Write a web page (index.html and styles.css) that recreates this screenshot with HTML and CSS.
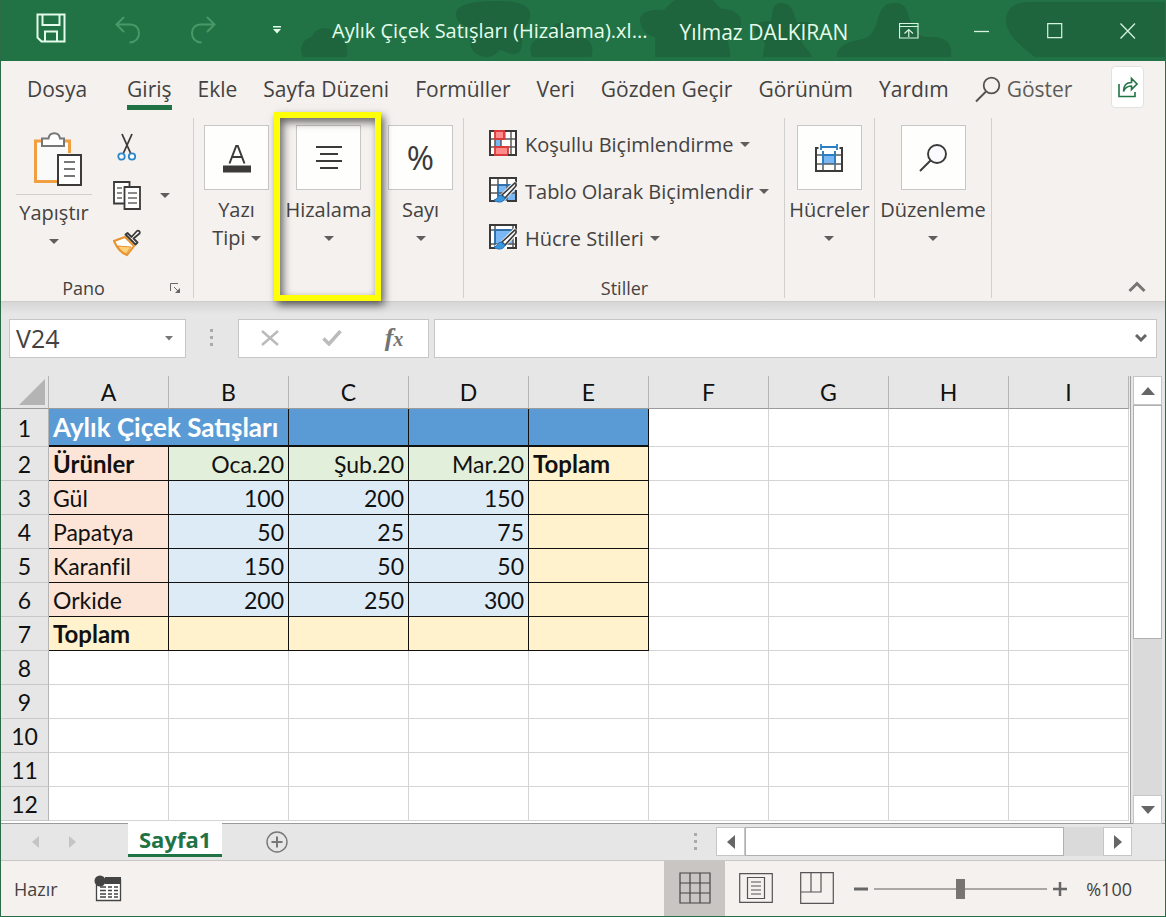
FILE: index.html
```html
<!DOCTYPE html>
<html lang="tr">
<head>
<meta charset="utf-8">
<title>Aylık Çiçek Satışları (Hizalama)</title>
<link rel="stylesheet" href="styles.css">
</head>
<body>
<div class="window">

  <header class="titlebar">
    <svg class="titlebar-art" width="864" height="57" viewBox="302 0 864 57" aria-hidden="true">
      <path d="M304 57c-4-8-1-18 9-20 3-11 20-12 24-1 9 1 14 14 10 21z"/>
      <path d="M457 13c2-12 30-12 44-12 16 0 32 4 30 16-1 9-9 13-8 21 0 8 0 15-7 16-6 1-10-4-16-4-3 6-12 9-20 5-12-5-8-16-8-26-6-3-16-7-15-16z"/>
      <path d="M533 57c-5-14 3-20 16-19 2-20 24-20 28-1 12-1 20 8 15 20z"/>
      <path d="M656 57V37c-11-2-15-10-15-18 1-7 12-10 24-9 3-2 8-10 13-10h34c4 0 7 8 11 9 12 0 20 6 19 15-1 10-6 14-13 14 0 9 3 14 2 19z"/>
      <path d="M764 57c0-8 4-14 0-17-7-3-10-8-7-13 3-7 10-5 15-6 2-9 1-18 10-18 12 0 12 11 16 19 6 0 16-1 17 6 1 6-7 9-13 12 2 7 9 11 11 17z"/>
      <path d="M838 57c-1-9 8-15 22-17 16-3 17-15 20-25 3-8 7-12 16-12 13 0 12 11 17 22 4 9 9 12 16 12 13 0 25 2 23 20z"/>
      <path d="M1007 20c0-12 10-18 24-18h135v55h-130c-13-10-29-22-29-37z"/>
    </svg>
    <div class="quick">
      <button class="quick-btn" aria-label="Kaydet"><svg width="30" height="30" viewBox="0 0 30 30"><path d="M1.500 1.500h27v27H5.500l-4-4zM6.500 2v10h17V2M9 28v-9.500h12V28" fill="none" stroke="#e4fdea" stroke-width="2"/></svg></button>
      <button class="quick-btn dim" aria-label="Geri Al"><svg width="26" height="28" viewBox="0 0 26 28"><path d="M9 1L1.500 8.500 9 16M2 8.500h13c6 0 9 4 9 8.500 0 6-3.500 9-9.500 9.500" fill="none" stroke="#4a9868" stroke-width="2"/></svg></button>
      <button class="quick-btn dim" aria-label="Yinele"><svg width="26" height="28" viewBox="0 0 26 28"><path d="M17 1l7.500 7.500L17 16M24 8.500H11c-6 0-9 4-9 8.500 0 6 3.500 9 9.500 9.500" fill="none" stroke="#4a9868" stroke-width="2"/></svg></button>
      <button class="quick-btn" aria-label="Hızlı Erişim Araç Çubuğunu Özelleştir"><svg width="8" height="8" viewBox="0 0 8 8"><path d="M0 0h8v1.500H0zM0 3h8L4 7.500z" fill="#e4fdea"/></svg></button>
    </div>
    <h1 class="doc-title">Aylık Çiçek Satışları (Hizalama).xl...</h1>
    <span class="user">Yılmaz DALKIRAN</span>
    <div class="win-buttons">
      <button aria-label="Şerit Görüntüleme Seçenekleri"><svg width="20" height="16" viewBox="0 0 20 16"><path d="M.5.500h18.500v14.500H.5zM.5 3.500H19M9.750 14V6.500M5.500 10.500l4.250-4 4.250 4" fill="none" stroke="#d5f3df" stroke-width="1.200"/></svg></button>
      <button aria-label="Simge Durumuna Küçült"><svg width="16" height="16" viewBox="0 0 16 16"><path d="M0 8.500h15" stroke="#d5f3df" stroke-width="1.300"/></svg></button>
      <button aria-label="Ekranı Kapla"><svg width="16" height="16" viewBox="0 0 16 16"><path d="M.7.700h14v14H.7z" fill="none" stroke="#d5f3df" stroke-width="1.200"/></svg></button>
      <button aria-label="Kapat"><svg width="16" height="16" viewBox="0 0 16 16"><path d="M.5.500l14.500 15M15 .5L.5 15.500" stroke="#d5f3df" stroke-width="1.300"/></svg></button>
    </div>
  </header>

  <nav class="tabs">
    <button class="tab tab-file">Dosya</button>
    <button class="tab tab-active">Giriş</button>
    <button class="tab">Ekle</button>
    <button class="tab">Sayfa Düzeni</button>
    <button class="tab">Formüller</button>
    <button class="tab">Veri</button>
    <button class="tab">Gözden Geçir</button>
    <button class="tab">Görünüm</button>
    <button class="tab">Yardım</button>
    <button class="tab tab-search"><svg width="26" height="27" viewBox="0 0 26 27"><circle cx="16.500" cy="9.500" r="7.800" fill="none" stroke="#555250" stroke-width="1.800"/><path d="M11 15.500L1 25.500" stroke="#555250" stroke-width="2"/></svg>Göster</button>
    <button class="share" aria-label="Paylaş"><svg width="22" height="22" viewBox="0 0 22 22"><path d="M2 8v12.500h16V16" fill="none" stroke="#217346" stroke-width="1.600"/><path d="M6.500 15.500c0-7 3-9 8-9V2.500l5.500 5.500-5.500 5.500V10c-4 0-6.500 1.500-8 5.500z" fill="none" stroke="#217346" stroke-width="1.600"/></svg></button>
  </nav>

  <section class="ribbon">
    <div class="group group-clip">
      <div class="clip-body">
        <button class="paste">
          <span class="paste-icon"><svg width="50" height="56" viewBox="0 0 50 56"><path d="M3 9h33.500v40H3z" fill="#fafafa"/><path d="M10 9H2.500v40.500H24M29 9h7.500v12" fill="none" stroke="#f0a040" stroke-width="3"/><path d="M9 14V6.500h6.500c1-7 10.500-7 11.500 0H31V14z" fill="#fff" stroke="#777" stroke-width="2"/><path d="M25 23h23v30H25z" fill="#fff" stroke="#3b3a39" stroke-width="2"/><path d="M31 30h11M31 37h11M31 44h11" stroke="#777" stroke-width="2"/></svg></span>
          <span>Yapıştır</span>
          <span class="caret-line"><i class="caret"></i></span>
        </button>
        <div class="clip-tools">
          <button aria-label="Kes"><svg width="20" height="28" viewBox="0 0 20 28"><path d="M5 1l8.500 19M15 1L6.500 20" stroke="#3b3a39" stroke-width="1.800"/><circle cx="4.500" cy="23.500" r="3.200" fill="#fff" stroke="#2a87c8" stroke-width="1.800"/><circle cx="15" cy="23.500" r="3.200" fill="#fff" stroke="#2a87c8" stroke-width="1.800"/></svg></button>
          <button aria-label="Kopyala"><svg width="28" height="29" viewBox="0 0 28 29"><path d="M11 22.500H1V1h15.500v4" fill="#fff" stroke="#3b3a39" stroke-width="1.800"/><path d="M4 7h5M4 12h5M4 17h5" stroke="#666" stroke-width="1.500"/><path d="M11.500 6H27v22H11.500z" fill="#fff" stroke="#3b3a39" stroke-width="1.800"/><path d="M15 12h9M15 17h9M15 22h9" stroke="#666" stroke-width="1.500"/></svg></button>
          <button aria-label="Biçim Boyacısı"><svg width="28" height="28" viewBox="0 0 28 28"><path d="M1 12l11-4 9 9-7 9C8 24 4 19 1 12z" fill="#fff" stroke="#e8922f" stroke-width="2"/><path d="M5 17l13 1-5 7c-4-2-6-4-8-8z" fill="#ffd27a" stroke="#e8922f"/><path d="M12.500 5.500l10 10 2-2-4-4 6-5c1-2-1-3.500-2.500-2.500l-5.500 6-4-4z" fill="#fff" stroke="#3b3a39" stroke-width="1.800" stroke-linejoin="round"/></svg></button>
        </div>
        <button class="copy-more" aria-label="Kopyalama seçenekleri"><i class="caret"></i></button>
      </div>
      <div class="group-foot"><span>Pano</span><button class="launcher" aria-label="Pano bölmesi"><svg width="11" height="11" viewBox="0 0 11 11"><path d="M.5 8V.5H8M4 4l5 5" fill="none" stroke="#666"/><path d="M10 5v5H5z" fill="#666"/></svg></button></div>
    </div>

    <div class="group group-format">
      <button class="big"><span class="tile"><svg width="30" height="30" viewBox="0 0 30 30"><path d="M7.500 20.500L14.200 3h1.600l6.700 17.500M10 14h10" fill="none" stroke="#3b3a39" stroke-width="2"/><path d="M1 22.500h28v7H1z" fill="#3b3a39"/></svg></span><span>Yazı</span><span class="caret-line">Tipi <i class="caret"></i></span></button>
      <button class="big big-marked"><span class="tile"><svg width="26" height="24" viewBox="0 0 26 24"><path d="M0 1h26M4 8h18M0 15h26M4 22h18" stroke="#3b3a39" stroke-width="2"/></svg></span><span>Hizalama</span><span class="caret-line"><i class="caret"></i></span></button>
      <button class="big"><span class="tile percent">%</span><span>Sayı</span><span class="caret-line"><i class="caret"></i></span></button>
    </div>

    <div class="group group-styles">
      <div class="style-list">
        <button class="style-item"><svg width="28" height="26" viewBox="0 0 28 26"><path d="M1 1h26v24H1z" fill="#fff"/><path d="M6 1h11v8H6zM6 17h13v8H6z" fill="#ff8b8b"/><path d="M6 9h6v8H6z" fill="#7ab8f5"/><path d="M1 9h26M1 17h26M22 1v24M6 9v8M12 9v8" stroke="#5a5958" stroke-width="1.500"/><path d="M6 1v8h9V1M6 25v-8h13v8" fill="none" stroke="#d83b3b" stroke-width="1.800"/><path d="M1 1h26v24H1z" fill="none" stroke="#3b3a39" stroke-width="2"/><path d="M5 1h11M5 25h14" stroke="#d83b3b" stroke-width="2"/></svg><span>Koşullu Biçimlendirme</span><i class="caret"></i></button>
        <button class="style-item"><svg width="28" height="26" viewBox="0 0 28 26"><path d="M1 1h26v23H1z" fill="#fff"/><path d="M9 8h18v16H9z" fill="#7ab8f5"/><path d="M1 8h26M1 16h26M9 1v23M18 1v23" stroke="#5a5958" stroke-width="1.500"/><path d="M9 24V8h18" fill="none" stroke="#1e6fb8" stroke-width="1.500"/><path d="M7 24H1V1h26v5M18 24h9V13" fill="none" stroke="#3b3a39" stroke-width="2"/><path d="M28 6L13 21l-6 4" stroke="#f4f1ef" stroke-width="7"/><path d="M26 6c2 1 1 3 0 4L16 21l-3-3z" fill="#fff" stroke="#3b3a39" stroke-width="1.600"/><path d="M12 18c-4 0-3 5-7 5 3 3 10 3 11-2z" fill="#3c96dc" stroke="#1e6fb8"/></svg><span>Tablo Olarak Biçimlendir</span><i class="caret"></i></button>
        <button class="style-item"><svg width="28" height="26" viewBox="0 0 28 26"><path d="M1 1h26v23H1z" fill="#fff"/><path d="M6 6h18v14H6z" fill="#7ab8f5"/><path d="M1 6h26M6 1v23M1 20h26M24 1v23" stroke="#5a5958" stroke-width="1.500"/><path d="M6 20V6h18" fill="none" stroke="#1e6fb8" stroke-width="1.500"/><path d="M7 24H1V1h26v5M18 24h9V13" fill="none" stroke="#3b3a39" stroke-width="2"/><path d="M28 6L13 21l-6 4" stroke="#f4f1ef" stroke-width="7"/><path d="M26 6c2 1 1 3 0 4L16 21l-3-3z" fill="#fff" stroke="#3b3a39" stroke-width="1.600"/><path d="M12 18c-4 0-3 5-7 5 3 3 10 3 11-2z" fill="#3c96dc" stroke="#1e6fb8"/></svg><span>Hücre Stilleri</span><i class="caret"></i></button>
      </div>
      <div class="group-foot"><span>Stiller</span></div>
    </div>

    <div class="group group-cells">
      <button class="big"><span class="tile"><svg width="28" height="30" viewBox="0 0 28 30"><path d="M1 6h26v22H1z" fill="#fff"/><path d="M8 12h12v9H8z" fill="#7ab8f5"/><path d="M1 12h26M1 21h26M8 8v20M20 8v20" stroke="#5a5958" stroke-width="1.500"/><path d="M3.500 5H1v23h26V5h-2.500" fill="none" stroke="#3b3a39" stroke-width="2"/><path d="M6 1v6M22 1v6M6 4h16M8 8v14M20 8v14M8 12h12" fill="none" stroke="#2a7fc4" stroke-width="1.800"/></svg></span><span>Hücreler</span><span class="caret-line"><i class="caret"></i></span></button>
    </div>

    <div class="group group-edit">
      <button class="big"><span class="tile"><svg width="28" height="28" viewBox="0 0 28 28"><circle cx="18" cy="10" r="9" fill="#fafaff" stroke="#3b3a39" stroke-width="1.900"/><path d="M11.500 16.500L1 27" stroke="#3b3a39" stroke-width="2"/></svg></span><span>Düzenleme</span><span class="caret-line"><i class="caret"></i></span></button>
    </div>

    <button class="collapse" aria-label="Şeridi Daralt"><svg width="18" height="12" viewBox="0 0 18 12"><path d="M1.500 10L9 2.500l7.500 7.500" fill="none" stroke="#777573" stroke-width="3"/></svg></button>
  </section>

  <section class="formula-bar">
    <div class="name-box">
      <input class="name-input" type="text" value="V24" aria-label="Ad Kutusu">
      <button aria-label="Ad listesi"><svg width="8" height="5" viewBox="0 0 8 5"><path d="M0 0h8L4 4.500z" fill="#777"/></svg></button>
    </div>
    <svg class="grip" width="4" height="18" viewBox="0 0 4 18"><path d="M0 0h3v3H0zM0 7h3v3H0zM0 14h3v3H0z" fill="#aaa"/></svg>
    <div class="fx-box">
      <button aria-label="İptal"><svg width="18" height="16" viewBox="0 0 18 16"><path d="M1 1l16 14M17 1L1 15" stroke="#bbb" stroke-width="2.500"/></svg></button>
      <button aria-label="Gir"><svg width="20" height="16" viewBox="0 0 20 16"><path d="M1.500 8.500l5.500 5.500L18.500 1" fill="none" stroke="#bbb" stroke-width="3.500"/></svg></button>
      <button class="fx" aria-label="İşlev Ekle">f<small>x</small></button>
    </div>
    <div class="formula-box">
      <input class="formula-input" type="text" aria-label="Formül Çubuğu">
      <button aria-label="Formül Çubuğunu Genişlet"><svg width="12" height="8" viewBox="0 0 12 8"><path d="M1 1l5 5 5-5" fill="none" stroke="#666" stroke-width="3"/></svg></button>
    </div>
  </section>

  <main class="work">
    <div class="sheet">
      <table class="grid">
        <thead>
          <tr><th class="corner" aria-label="Tümünü Seç"><svg width="26" height="26" viewBox="0 0 26 26"><path d="M26 0v26H0z" fill="#b4b4b4"/></svg></th><th>A</th><th>B</th><th>C</th><th>D</th><th>E</th><th>F</th><th>G</th><th>H</th><th>I</th></tr>
        </thead>
        <tbody>
          <tr class="row-title"><th>1</th><td class="title" colspan="2">Aylık Çiçek Satışları</td><td class="title"></td><td class="title"></td><td class="title"></td><td></td><td></td><td></td><td></td></tr>
          <tr><th>2</th><td class="box name strong">Ürünler</td><td class="box month">Oca.20</td><td class="box month">Şub.20</td><td class="box month">Mar.20</td><td class="box total strong">Toplam</td><td></td><td></td><td></td><td></td></tr>
          <tr><th>3</th><td class="box name">Gül</td><td class="box num">100</td><td class="box num">200</td><td class="box num">150</td><td class="box total"></td><td></td><td></td><td></td><td></td></tr>
          <tr><th>4</th><td class="box name">Papatya</td><td class="box num">50</td><td class="box num">25</td><td class="box num">75</td><td class="box total"></td><td></td><td></td><td></td><td></td></tr>
          <tr><th>5</th><td class="box name">Karanfil</td><td class="box num">150</td><td class="box num">50</td><td class="box num">50</td><td class="box total"></td><td></td><td></td><td></td><td></td></tr>
          <tr><th>6</th><td class="box name">Orkide</td><td class="box num">200</td><td class="box num">250</td><td class="box num">300</td><td class="box total"></td><td></td><td></td><td></td><td></td></tr>
          <tr><th>7</th><td class="box total strong">Toplam</td><td class="box total"></td><td class="box total"></td><td class="box total"></td><td class="box total"></td><td></td><td></td><td></td><td></td></tr>
          <tr><th>8</th><td></td><td></td><td></td><td></td><td></td><td></td><td></td><td></td><td></td></tr>
          <tr><th>9</th><td></td><td></td><td></td><td></td><td></td><td></td><td></td><td></td><td></td></tr>
          <tr><th>10</th><td></td><td></td><td></td><td></td><td></td><td></td><td></td><td></td><td></td></tr>
          <tr><th>11</th><td></td><td></td><td></td><td></td><td></td><td></td><td></td><td></td><td></td></tr>
          <tr><th>12</th><td></td><td></td><td></td><td></td><td></td><td></td><td></td><td></td><td></td></tr>
        </tbody>
      </table>
    </div>
    <div class="vscroll">
      <button aria-label="Yukarı kaydır"><svg width="14" height="8" viewBox="0 0 14 8"><path d="M0 8h14L7 0z" fill="#666"/></svg></button>
      <div class="vtrack"><div class="vthumb"></div></div>
      <button aria-label="Aşağı kaydır"><svg width="14" height="8" viewBox="0 0 14 8"><path d="M0 0h14L7 8z" fill="#666"/></svg></button>
    </div>
  </main>

  <div class="sheet-tabs">
    <button class="nav" aria-label="Önceki sayfa"><svg width="7" height="12" viewBox="0 0 7 12"><path d="M7 0v12L0 6z" fill="#c4c4c4"/></svg></button>
    <button class="nav" aria-label="Sonraki sayfa"><svg width="7" height="12" viewBox="0 0 7 12"><path d="M0 0v12l7-6z" fill="#c4c4c4"/></svg></button>
    <button class="sheet-tab">Sayfa1</button>
    <button class="add-sheet" aria-label="Yeni sayfa"><svg width="22" height="22" viewBox="0 0 22 22"><circle cx="11" cy="11" r="10" fill="none" stroke="#777" stroke-width="1.400"/><path d="M11 5.500v11M5.500 11h11" stroke="#777" stroke-width="2"/></svg></button>
    <svg class="grip" width="4" height="18" viewBox="0 0 4 18"><path d="M0 0h3v3H0zM0 7h3v3H0zM0 14h3v3H0z" fill="#aaa"/></svg>
    <div class="hscroll">
      <button aria-label="Sola kaydır"><svg width="8" height="14" viewBox="0 0 8 14"><path d="M8 0v14L0 7z" fill="#666"/></svg></button>
      <div class="htrack"><div class="hthumb"></div></div>
      <button aria-label="Sağa kaydır"><svg width="8" height="14" viewBox="0 0 8 14"><path d="M0 0v14l8-7z" fill="#666"/></svg></button>
    </div>
  </div>

  <footer class="status">
    <span class="ready">Hazır</span>
    <button class="macro" aria-label="Makro kaydet"><svg width="28" height="28" viewBox="0 0 28 28"><path d="M2.500 10v15.500h24V4" fill="#fff" stroke="#444" stroke-width="1.300"/><path d="M11 2h16v7H11z" fill="#444"/><circle cx="6" cy="6" r="5.500" fill="#444"/><path d="M6 12h6M14 12h4M20 12h4M6 15.500h6M14 15.500h4M20 15.500h4M6 19h6M14 19h4M20 19h4M6 22h6M14 22h4M20 22h4" stroke="#444" stroke-width="1.500"/></svg></button>
    <div class="views">
      <button class="view view-active" aria-label="Normal"><svg width="32" height="32" viewBox="0 0 32 32"><path d="M1 1h30v30H1zM11 1v30M21 1v30M1 11h30M1 21h30" fill="none" stroke="#444" stroke-width="1.200"/></svg></button>
      <button class="view" aria-label="Sayfa Düzeni"><svg width="34" height="30" viewBox="0 0 34 30"><path d="M.7.700h32.600v28.600H.7zM8.500 4.500h17v21h-17zM12 9h10M12 13h10M12 17h10M12 21h10" fill="none" stroke="#555" stroke-width="1.200"/></svg></button>
      <button class="view" aria-label="Sayfa Sonu Önizleme"><svg width="34" height="32" viewBox="0 0 34 32"><path d="M.7.700h32.600v30.600H.7zM.7 20H21V.7M11 .7V20" fill="none" stroke="#555" stroke-width="1.200"/></svg></button>
    </div>
    <div class="zoom">
      <button aria-label="Uzaklaştır"><svg width="14" height="14" viewBox="0 0 14 14"><path d="M0 7h14" stroke="#666" stroke-width="3"/></svg></button>
      <input class="zoom-range" type="range" min="0" max="200" value="100" aria-label="Yakınlaştırma">
      <button aria-label="Yakınlaştır"><svg width="14" height="14" viewBox="0 0 14 14"><path d="M0 7h14M7 0v14" stroke="#666" stroke-width="2.500"/></svg></button>
      <span class="zoom-value">%100</span>
    </div>
  </footer>
</div>
</body>
</html>
```

FILE: styles.css
```css
* { box-sizing: border-box; }

body {
  margin: 0;
  font-family: "Open Sans", "Noto Sans", sans-serif;
  font-size: 20px;
  line-height: 28px;
  color: #444240;
}

button, input {
  margin: 0;
  padding: 0;
  border: 0;
  background: none;
  font: inherit;
  color: inherit;
}

svg { display: block; flex: none; }

.window {
  display: flex;
  flex-direction: column;
  height: 100vh;
  border: 1px solid #2a6b48;
  border-top: 0;
  background: #e6e6e6;
  overflow: hidden;
}

/* Title bar */
.titlebar {
  position: relative;
  display: flex;
  align-items: center;
  flex: none;
  height: 61px;
  padding: 0 1px 0 35px;
  background: #217346;
  color: #e4fdea;
}
.titlebar-art {
  position: absolute;
  top: 0;
  right: 0;
  fill: #1e643d;
}
.quick { display: flex; align-items: center; gap: 49px; height: 100%; padding-bottom: 6px; }
.quick .dim { padding-top: 4px; }
.quick-btn:last-child { margin-left: 8px; padding-top: 4px; }
.doc-title {
  position: relative;
  margin: 0 0 0 51px;
  font-size: 20px;
  font-weight: 400;
  white-space: nowrap;
}
.user { position: relative; margin-left: 32px; padding-top: 2px; font-size: 21px; white-space: nowrap; }
.win-buttons { position: relative; display: flex; height: 60px; margin-left: auto; }
.win-buttons button { display: grid; place-items: center; width: 73px; }

/* Ribbon tabs */
.tabs {
  display: flex;
  flex: none;
  height: 51px;
  padding: 5px 21px 0 26px;
  background: #f4f1ef;
  font-size: 21px;
  gap: 26px;
}
.tab { position: relative; height: 46px; white-space: nowrap; }
.tab-file { margin-right: 14px; }
.tab-active::after {
  content: "";
  position: absolute;
  left: 0;
  right: 0;
  bottom: 2px;
  height: 5px;
  background: #217346;
}
.tab-search { display: flex; align-items: center; gap: 6px; color: #5e5b58; }
.share {
  display: grid;
  place-items: center;
  width: 33px;
  height: 42px;
  margin-left: auto;
  border: 1px solid #e4e2e0;
  border-radius: 4px;
  background: #fff;
}

/* Ribbon body */
.ribbon {
  position: relative;
  display: flex;
  flex: none;
  height: 190px;
  padding: 6px 0 3px;
  border-bottom: 1px solid #cfcdcb;
  background: #f4f1ef;
}
.group { display: flex; border-right: 1px solid #d2d0ce; }
.caret {
  display: inline-block;
  border: 5px solid transparent;
  border-top-color: #605e5c;
  border-bottom: 0;
  vertical-align: 4px;
}
.caret-line { display: block; white-space: nowrap; }

.group-clip { flex-direction: column; width: 193px; }
.clip-body { display: flex; flex: 1; padding-left: 15px; }
.paste { display: flex; flex-direction: column; align-items: center; width: 76px; }
.paste-icon {
  display: grid;
  place-items: center;
  width: 100%;
  height: 77px;
  margin-bottom: 4px;
  padding: 8px 0 0 8px;
  border-bottom: 1px solid #d2d0ce;
}
.clip-tools { display: flex; flex-direction: column; width: 28px; margin-left: 21px; padding-top: 5px; }
.clip-tools button { display: grid; place-items: center; height: 48px; }
.copy-more { width: 48px; height: 154px; }
.group-foot {
  position: relative;
  display: flex;
  justify-content: center;
  flex: none;
  font-size: 18px;
  line-height: 20px;
}
.group-clip .group-foot { padding-right: 27px; }
.launcher { position: absolute; right: 12px; top: 5px; }

.big { display: flex; flex-direction: column; align-items: center; padding-top: 7px; white-space: nowrap; }
.tile {
  display: grid;
  place-items: center;
  width: 65px;
  height: 65px;
  margin-bottom: 6px;
  border: 1px solid #c8c6c4;
  background: #fefefc;
}
.percent { font-size: 33px; color: #3b3a39; }
.group-format .big { width: 85px; }
.group-format .big-marked { position: relative; width: 99px; }
.big-marked::after {
  content: "";
  position: absolute;
  inset: -6px -3px -3px -5px;
  border: 6px solid #ffff08;
  box-shadow: 3px 4px 8px rgba(0, 0, 0, .6), inset 3px 4px 8px rgba(0, 0, 0, .6);
}

.group-styles { flex-direction: column; width: 320px; margin-left: 1px; padding-left: 24px; }
.style-list { display: flex; flex-direction: column; flex: 1; padding-top: 3px; }
.style-item { display: flex; align-items: center; height: 47px; gap: 8px; white-space: nowrap; }
.style-item svg { margin-bottom: 3px; }
.style-item .caret { margin-left: -2px; }
.group-styles .group-foot { padding-right: 24px; }

.group-cells, .group-edit { justify-content: center; }
.group-cells { width: 90px; }
.group-edit { width: 117px; }
.collapse { position: absolute; right: 19px; bottom: 8px; }

/* Formula bar */
.formula-bar {
  display: flex;
  align-items: center;
  flex: none;
  height: 74px;
  padding: 0 8px 2px;
  background: linear-gradient(#d6d6d6, #e6e6e6 12px);
}
.name-box, .fx-box, .formula-box {
  display: flex;
  align-items: center;
  height: 39px;
  border: 1px solid #c6c6c6;
  background: #fff;
}
.name-box { width: 177px; padding: 0 12px 0 6px; }
.name-input { flex: 1; min-width: 0; font-size: 25px; }
.formula-bar .grip { margin: 0 24px; }
.fx-box { width: 191px; padding-right: 3px; }
.fx-box button { display: grid; place-items: center; flex: 1; }
.fx-box .fx {
  display: block;
  font-family: "Liberation Serif", serif;
  font-style: italic;
  font-weight: 700;
  font-size: 26px;
  color: #737373;
}
.fx small { font-size: 20px; }
.formula-box { flex: 1; margin-left: 5px; padding-right: 9px; }
.formula-input { flex: 1; min-width: 0; }

/* Worksheet */
.work { display: flex; flex: 1; min-height: 0; }
.sheet { flex: 1; min-width: 0; overflow: hidden; background: linear-gradient(#e6e6e6 33px, #fff 33px); border-right: 1px solid #a0a0a0; }
.grid {
  width: 1128px;
  table-layout: fixed;
  border-collapse: separate;
  border-spacing: 0;
  font-family: Lato, "Noto Sans", sans-serif;
  font-size: 23px;
  line-height: 30px;
  color: #111;
}
.grid th, .grid td { padding: 0 4px; height: 34px; }
.grid td { border-right: 1px solid #d4d4d4; border-bottom: 1px solid #d4d4d4; }
.grid th { background: #e6e6e6; font-weight: 400; border-right: 1px solid #b5b5b5; border-bottom: 1px solid #c9c9c9; }
.grid thead th { width: 120px; height: 33px; border-bottom-color: #9b9b9b; }
.grid thead .corner { width: 48px; padding: 0 3px 3px 18px; vertical-align: bottom; }
.grid .row-title td, .grid .row-title th { height: 38px; }
.grid .title {
  background: #5b9bd5;
  color: #fff;
  font-size: 26px;
  font-weight: 700;
  border-right-color: #111;
  border-bottom: 2px solid #111;
}
.grid .box { border-color: #111; }
.grid .strong { font-size: 24px; font-weight: 700; }
.name { background: #fce4d6; }
.month { background: #e2efda; text-align: right; }
.num { background: #ddebf7; text-align: right; }
.total { background: #fff2cc; }

.vscroll { display: flex; flex-direction: column; width: 30px; margin: 0 2px -1px; }
.vscroll button, .hscroll button {
  display: grid;
  place-items: center;
  flex: none;
  width: 29px;
  height: 29px;
  border: 1px solid #c6c6c6;
  background: #fff;
}
.vscroll button { position: relative; }
.vtrack { flex: 1; width: 29px; background: #dadada; }
.vthumb { height: 60%; border: 1px solid #b0b0b0; background: #fff; }

/* Sheet tabs */
.sheet-tabs {
  display: flex;
  align-items: center;
  flex: none;
  height: 37px;
  padding: 0 33px 1px 0;
  border-top: 1px solid #9b9b9b;
}
.nav { display: grid; place-items: center; width: 37px; height: 36px; }
.nav:first-child { margin-left: 16px; }
.sheet-tab {
  align-self: flex-start;
  height: 34px;
  margin: -1px 44px 0 37px;
  padding: 0 11px;
  border-bottom: 3px solid #217346;
  background: #fff;
  font-size: 22px;
  font-weight: 700;
  color: #217346;
}
.sheet-tabs .grip { margin: 0 18px 0 auto; }
.hscroll { display: flex; width: 416px; }
.htrack { flex: 1; background: #dadada; }
.hthumb { width: 89%; height: 29px; border: 1px solid #b0b0b0; background: #fff; }

/* Status bar */
.status {
  display: flex;
  align-items: center;
  flex: none;
  height: 56px;
  padding-right: 33px;
  border-top: 1px solid #c9c7c5;
  background: #f4f1ef;
  font-size: 18px;
}
.ready { margin-left: 13px; }
.macro { margin-left: 36px; }
.views { display: flex; height: 100%; margin-left: auto; }
.view { display: grid; place-items: center; width: 61px; padding-bottom: 2px; }
.view-active { background: #c8c5c2; }
.zoom { display: flex; align-items: center; margin-left: 7px; }
.zoom-range { width: 173px; height: 20px; margin: 0 6px; appearance: none; }
.zoom-range::-webkit-slider-runnable-track {
  height: 20px;
  background: linear-gradient(#aaa7a4, #aaa7a4) center / 100% 2px no-repeat;
}
.zoom-range::-webkit-slider-thumb { appearance: none; width: 9px; height: 20px; background: #777472; }
.zoom-value { margin-left: 19px; }
```
